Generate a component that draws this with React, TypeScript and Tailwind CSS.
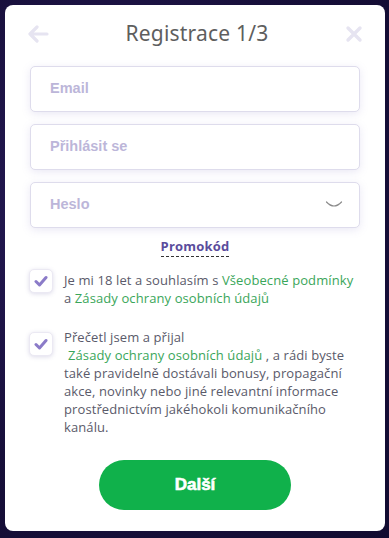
import React from "react";

function Check() {
  return (
    <div className="w-[24px] h-[24px] shrink-0 rounded-[5px] border border-[#ebe9f3] bg-white shadow-[0_1px_4px_rgba(120,110,170,0.25)] flex items-center justify-center">
      <svg width="14" height="12" viewBox="0 0 14 12">
        <path d="M2 6.5 L5.5 10 L12 2.5" fill="none" stroke="#8b7bc8" strokeWidth="3" strokeLinecap="round" strokeLinejoin="round" />
      </svg>
    </div>
  );
}

function Field({ label, extra }: { label: string; extra?: React.ReactNode }) {
  return (
    <div className="h-[46px] rounded-[5px] border border-[#dedcec] bg-white shadow-[0_2px_8px_rgba(140,130,200,0.18)] flex items-center pl-[19px] pr-[16px]">
      <span className="flex-1 text-[14.5px] font-bold text-[#bcb6d9]" style={{ fontFamily: '"Liberation Sans", Arial, sans-serif' }}>{label}</span>
      {extra}
    </div>
  );
}

export default function App() {
  const font = { fontFamily: '"Open Sans", "Noto Sans", sans-serif' };
  return (
    <div className="w-[389px] h-[538px] bg-[radial-gradient(ellipse_at_30%_40%,#2a1d5e_0%,#170f3a_60%,#120b30_100%)] pt-[5px] px-[5px]" style={font}>
      <div className="w-[380px] h-[526px] bg-white rounded-[8px] flex flex-col">
        <div className="h-[56px] flex items-center justify-between px-[22px] pt-[2px]">
          <svg width="22" height="18" viewBox="0 0 22 18">
            <path d="M20 9 H3 M10 2 L3 9 L10 16" fill="none" stroke="#e6e4f1" strokeWidth="3.2" strokeLinecap="round" strokeLinejoin="round" />
          </svg>
          <span className="text-[21px] text-[#5e5e5e] tracking-[0.2px]" style={{ fontFamily: '"Noto Sans", "Open Sans", sans-serif' }}>Registrace 1/3</span>
          <svg width="18" height="18" viewBox="0 0 18 18">
            <path d="M3 3 L15 15 M15 3 L3 15" fill="none" stroke="#e6e4f1" strokeWidth="3.4" strokeLinecap="round" />
          </svg>
        </div>
        <div className="mt-[5px] px-[25px] flex flex-col gap-[12px]">
          <Field label="Email" />
          <Field label="Přihlásit se" />
          <Field
            label="Heslo"
            extra={
              <svg width="18" height="10" viewBox="0 0 18 10">
                <path d="M1.5 2 Q9 10 16.5 2" fill="none" stroke="#8a8a8a" strokeWidth="1.2" strokeLinecap="round" />
              </svg>
            }
          />
        </div>
        <div className="mt-[10px] flex justify-center">
          <span className="text-[13px] font-bold text-[#5a4c9c] border-b border-dashed border-[#333] leading-[17px] pb-[1px] tracking-[0.2px]">Promokód</span>
        </div>
        <div className="mt-[12px] pl-[24px] pr-[30px] flex gap-[11px]">
          <Check />
          <p className="text-[13px] leading-[18px] text-[#5a5a6a] mt-[2px] tracking-[0.1px]">
            Je mi 18 let a souhlasím s <span className="text-[#3aa65a]">Všeobecné podmínky</span> a <span className="text-[#3aa65a]">Zásady ochrany osobních údajů</span>
          </p>
        </div>
        <div className="mt-[25px] pl-[24px] pr-[30px] flex gap-[11px]">
          <Check />
          <p className="text-[13px] leading-[18px] text-[#5a5a6a] -mt-[4px] tracking-[0.1px]">
            Přečetl jsem a přijal
            <br />
            <span className="text-[#3aa65a] pl-[4px]">Zásady ochrany osobních údajů</span> , a rádi byste také pravidelně dostávali bonusy, propagační akce, novinky nebo jiné relevantní informace prostřednictvím jakéhokoli komunikačního kanálu.
          </p>
        </div>
        <div className="mt-auto mb-[21px] flex justify-center">
          <button className="w-[192px] h-[50px] rounded-full bg-[#10b14b] text-white text-[17px] font-bold" style={{ fontFamily: '"Liberation Sans", Arial, sans-serif', WebkitTextStroke: "0.6px white" }}>
            Další
          </button>
        </div>
      </div>
    </div>
  );
}
